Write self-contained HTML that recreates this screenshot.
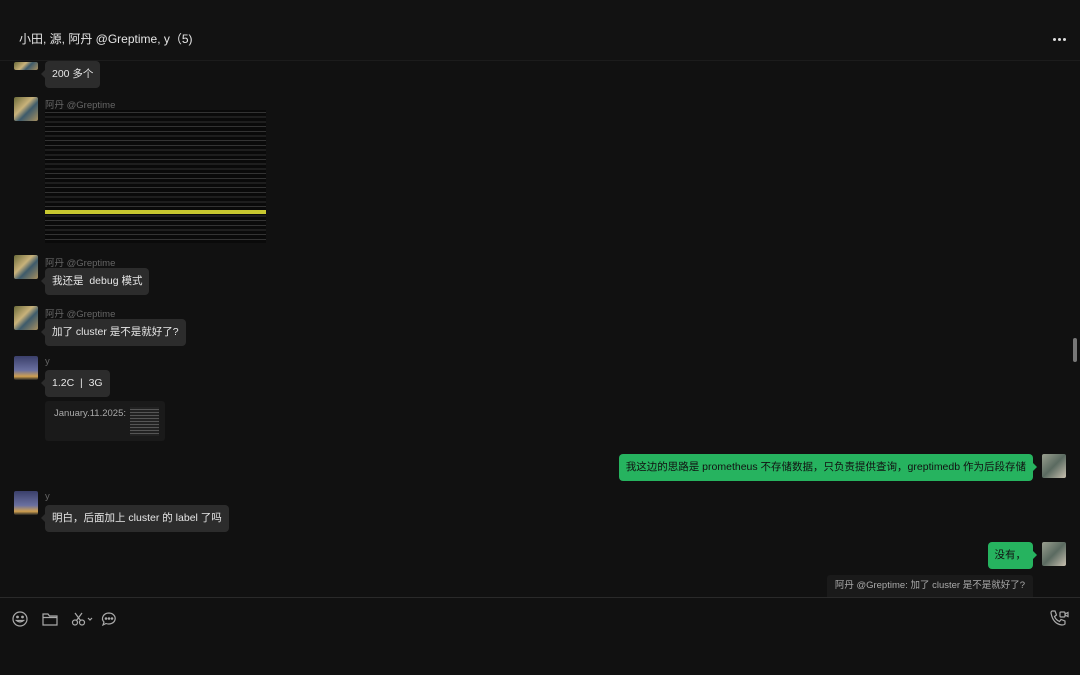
<!DOCTYPE html><html><head><meta charset="utf-8"><style>
*{margin:0;padding:0;box-sizing:border-box}
body{width:1080px;height:675px;background:#111;color:#ddd;font-family:"Liberation Sans","Noto Sans CJK SC",sans-serif;position:relative;overflow:hidden}
.a{position:absolute}
.hdr{left:0;top:0;width:1080px;height:61px;border-bottom:1px solid #1c1c1c;background:#121212}
.title{left:19px;top:30px;font-size:12px;color:#e6e6e6}
.dot{width:3px;height:3px;border-radius:50%;background:#ddd;top:38px}
.av{width:24px;height:24px;border-radius:2px}
.av1{background:linear-gradient(135deg,#6b6b3a,#c9b27a 40%,#3d5a6b 60%,#a89060)}
.av2{background:linear-gradient(180deg,#3a3f6a,#6a70a0 60%,#d0a050 85%,#222)}
.av3{background:linear-gradient(135deg,#9aa090,#5a6a60 50%,#c8c0b0)}
.name{font-size:9.5px;color:#666}
.b{background:#2c2c2c;border-radius:4px;font-size:10.5px;color:#e6e6e6;padding:0 7px;height:27px;line-height:27px;white-space:nowrap}
.b:before{content:"";position:absolute;left:-4px;top:9px;border:4px solid transparent;border-left:0;border-right-color:#2c2c2c}
.g{background:#26b35f;color:#111}
.g:before{left:auto;right:-4px;border:4px solid transparent;border-right:0;border-left-color:#26b35f}
</style></head><body>
<div class="a hdr"></div>
<div class="a title">小田, 源, 阿丹 @Greptime, y（5)</div>
<div class="a dot" style="left:1053px"></div><div class="a dot" style="left:1058px"></div><div class="a dot" style="left:1063px"></div>

<div class="a av av1" style="left:14px;top:62px;height:8px"></div>
<div class="a b" style="left:45px;top:61px">200 多个</div>

<div class="a av av1" style="left:14px;top:97px"></div>
<div class="a name" style="left:45px;top:97px">阿丹 @Greptime</div>
<div class="a" style="left:45px;top:110px;width:221px;height:133px;background:#0a0a0a"></div>
<div class="a" style="left:45px;top:110px;width:221px;height:133px;background:repeating-linear-gradient(180deg,transparent 0,transparent 2px,#333 2px,#333 3px,transparent 3px,transparent 4.7px)"></div>
<div class="a" style="left:45px;top:210px;width:221px;height:4px;background:#c8c830"></div>

<div class="a av av1" style="left:14px;top:255px"></div>
<div class="a name" style="left:45px;top:255px">阿丹 @Greptime</div>
<div class="a b" style="left:45px;top:268px">我还是&nbsp; debug 模式</div>

<div class="a av av1" style="left:14px;top:306px"></div>
<div class="a name" style="left:45px;top:306px">阿丹 @Greptime</div>
<div class="a b" style="left:45px;top:319px">加了 cluster 是不是就好了?</div>

<div class="a av av2" style="left:14px;top:356px"></div>
<div class="a name" style="left:45px;top:356px">y</div>
<div class="a b" style="left:45px;top:370px">1.2C &nbsp;|&nbsp; 3G</div>
<div class="a" style="left:45px;top:401px;width:120px;height:40px;background:#1a1a1a;border-radius:3px"></div>
<div class="a" style="left:54px;top:408px;font-size:9.5px;color:#aaa">January.11.2025:</div>
<div class="a" style="left:130px;top:407px;width:29px;height:29px;background:repeating-linear-gradient(180deg,#222 0,#222 2px,#555 2px,#555 3px)"></div>

<div class="a b g" style="right:47px;top:454px">我这边的思路是 prometheus 不存储数据，只负责提供查询，greptimedb 作为后段存储</div>
<div class="a av av3" style="left:1042px;top:454px"></div>

<div class="a av av2" style="left:14px;top:491px"></div>
<div class="a name" style="left:45px;top:491px">y</div>
<div class="a b" style="left:45px;top:505px">明白，后面加上 cluster 的 label 了吗</div>

<div class="a b g" style="right:47px;top:542px">没有，</div>
<div class="a av av3" style="left:1042px;top:542px"></div>
<div class="a" style="right:47px;top:575px;height:22px;background:#1a1a1a;border-radius:3px 3px 0 0;font-size:9.5px;color:#aaa;line-height:22px;padding:0 8px;white-space:nowrap">阿丹 @Greptime: 加了 cluster 是不是就好了?</div>

<div class="a" style="left:0;top:597px;width:1080px;height:1px;background:#2a2a2a"></div>
<div class="a" style="left:1073px;top:338px;width:4px;height:24px;border-radius:2px;background:#777"></div>

<svg class="a" style="left:0;top:605px" width="130" height="30" fill="none" stroke="#aaa" stroke-width="1.2">
<circle cx="20" cy="14" r="7"/><circle cx="17.5" cy="12" r=".8" fill="#aaa"/><circle cx="22.5" cy="12" r=".8" fill="#aaa"/><path d="M16.5 15.5q3.5 3 7 0z"/>
<path d="M43 9h5l1.5 2H57v9H43z M43 12.5h14"/>
<circle cx="75" cy="17.5" r="2.5"/><circle cx="82" cy="17.5" r="2.5"/><path d="M76.5 15.5L82 8 M80.5 15.5L75 8"/><path d="M88 13l2 2 2-2"/>
<path d="M109 8a6.5 5.5 0 1 1-3 10.5l-3 1.5 1-3a6.5 5.5 0 0 1 5-9z"/><circle cx="106" cy="13.5" r=".7" fill="#aaa"/><circle cx="109" cy="13.5" r=".7" fill="#aaa"/><circle cx="112" cy="13.5" r=".7" fill="#aaa"/>
</svg>
<svg class="a" style="left:1048px;top:608px" width="22" height="22" fill="none" stroke="#aaa" stroke-width="1.2">
<path d="M4 3l3 0 1.5 4-2 1.5q1.5 3.5 5 5l1.5-2 4 1.5v3q-1 1-3 1Q5 16 3 5q0-1.5 1-2z"/><rect x="12" y="4" width="5" height="5" rx="1"/><path d="M17 6l3-1.5v4l-3-1.5"/>
</svg>
</body></html>
